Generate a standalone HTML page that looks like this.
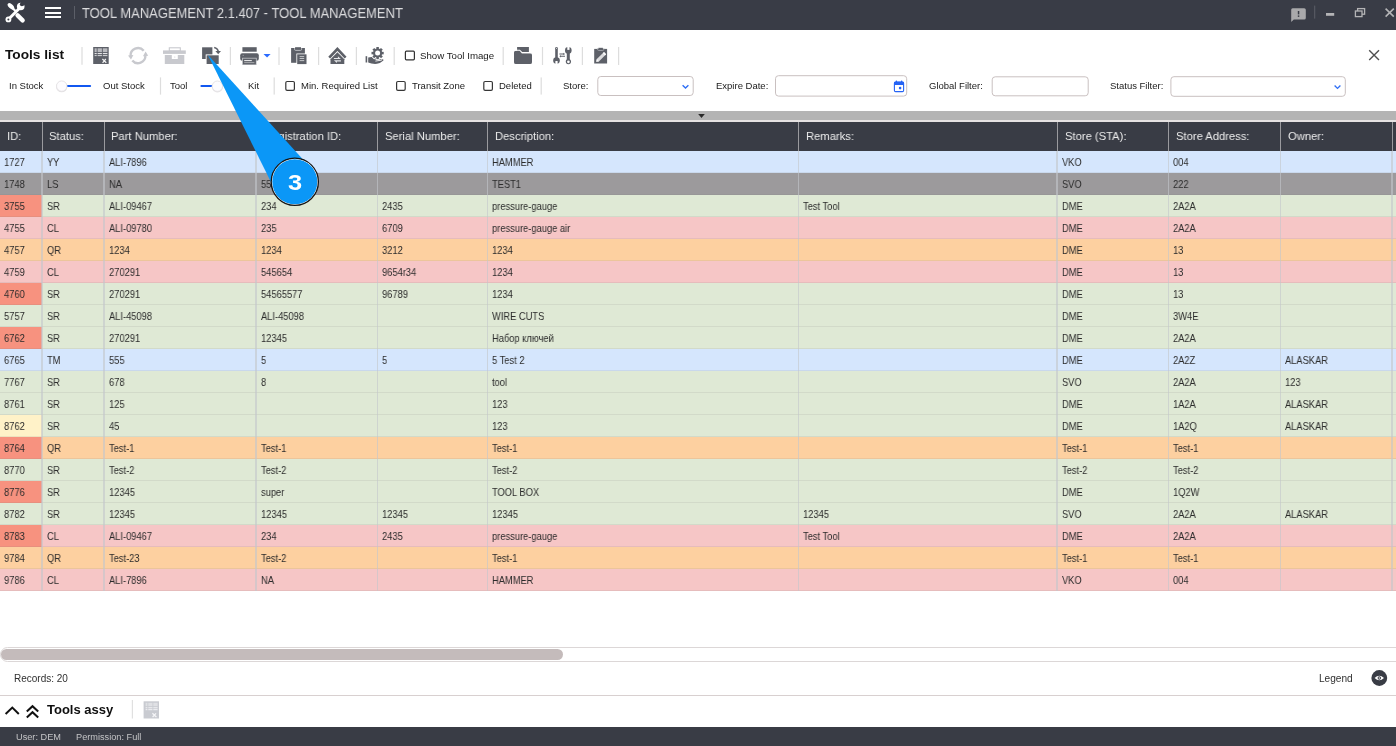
<!DOCTYPE html><html><head><meta charset="utf-8"><style>
*{margin:0;padding:0;box-sizing:border-box}
html,body{width:1396px;height:746px;overflow:hidden;background:#fff;font-family:"Liberation Sans",sans-serif;color:#3a3a3a}
.a{position:absolute}
.t{position:absolute;white-space:nowrap;line-height:1;will-change:transform}
</style></head><body>
<div class="a" style="left:0px;top:0px;width:1396px;height:29.5px;background:#393c46;"></div>
<svg class="a" style="left:2px;top:0" width="28" height="26" viewBox="0 0 28 26">
<g fill="#fff" stroke="#fff">
<ellipse cx="8.9" cy="6.3" rx="4.0" ry="2.2" transform="rotate(45 8.9 6.3)" stroke="none"/>
<line x1="9" y1="6.5" x2="14.5" y2="12" stroke-width="2.2"/>
<line x1="15.6" y1="15.4" x2="20.6" y2="20.4" stroke-width="4.4" stroke-linecap="round"/>
<line x1="7" y1="18.8" x2="17" y2="8.8" stroke-width="3"/>
<circle cx="6.4" cy="19.4" r="2.9" stroke="none"/>
<circle cx="18.7" cy="6.5" r="3.8" stroke="none"/>
</g>
<circle cx="6.4" cy="19.4" r="1.0" fill="#393c46"/>
<circle cx="19.9" cy="4.3" r="2.0" fill="#393c46"/>
<rect x="17.9" y="0" width="4" height="4.3" fill="#393c46" transform="rotate(45 19.9 4.3)"/>
</svg>
<div class="a" style="left:45px;top:6.8px;width:16.4px;height:2.2px;background:#fff;"></div>
<div class="a" style="left:45px;top:11.6px;width:16.4px;height:2.2px;background:#fff;"></div>
<div class="a" style="left:45px;top:16.2px;width:16.4px;height:2.2px;background:#fff;"></div>
<div class="a" style="left:73.6px;top:5.7px;width:1.2px;height:13px;background:#5c5f68;"></div>
<div class="t" style="left:81.5px;top:5.66px;font-size:14.1px;color:#dcdcde;transform:scaleX(0.922);transform-origin:0 0;">TOOL MANAGEMENT 2.1.407 - TOOL MANAGEMENT</div>
<svg class="a" style="left:1288px;top:4px" width="108" height="20" viewBox="1288 4 108 20">
<path d="M1292.6 8.2 h11.6 a1.6 1.6 0 0 1 1.6 1.6 v8.2 a1.6 1.6 0 0 1 -1.6 1.6 h-10.4 l-2.6 2.4 v-12.2 a1.6 1.6 0 0 1 1.4 -1.6z" fill="#a9a9ab"/>
<rect x="1297.8" y="11" width="1.5" height="3.4" fill="#393c46"/>
<rect x="1297.8" y="15.4" width="1.5" height="1.5" fill="#393c46"/>
<rect x="1314.2" y="5.6" width="1" height="13" fill="#5c5f68"/>
<rect x="1326" y="13" width="8.2" height="2.8" fill="#b4b4b6"/>
<rect x="1357.6" y="8.6" width="7" height="5.6" fill="none" stroke="#b4b4b6" stroke-width="1.3"/>
<rect x="1355.4" y="11" width="6.6" height="5.6" fill="#393c46" stroke="#b4b4b6" stroke-width="1.3"/>
<path d="M1385.6 8.6 L1393.8 16.6 M1393.8 8.6 L1385.6 16.6" stroke="#b4b4b6" stroke-width="1.6"/>
</svg>
<div class="t" style="left:5px;top:47.60px;font-size:13.7px;color:#111;font-weight:bold;">Tools list</div>
<svg class="a" style="left:0;top:29px" width="1396" height="82" viewBox="0 29 1396 82"><rect x="81.4" y="47" width="1.2" height="17.799999999999997" fill="#dddddd"/><rect x="93.2" y="47" width="15.5" height="17" fill="#5d6068"/><g fill="#b9babe"><rect x="94.6" y="48.3" width="2.1" height="3.8"/><rect x="97.6" y="48.3" width="4.3" height="3.8"/><rect x="102.8" y="48.3" width="4.6" height="3.8"/></g><g fill="#e4e4e6"><rect x="94.6" y="53.0" width="2.1" height="1.1"/><rect x="97.6" y="53.0" width="4.3" height="1.1"/><rect x="102.8" y="53.0" width="4.6" height="1.1"/></g><g fill="#c9cacd"><rect x="94.6" y="55.0" width="2.1" height="1.1"/><rect x="97.6" y="55.0" width="4.3" height="1.1"/><rect x="102.8" y="55.0" width="4.6" height="1.1"/></g><path d="M102.4 59.0 L106.3 62.8 M105.8 59.0 L102.6 62.8" stroke="#f4f4f4" stroke-width="1.2"/><g fill="none" stroke="#c8c9ce" stroke-width="2.4"><path d="M130.6 56.2 A7.4 7.4 0 0 1 143.7 50.8"/><path d="M132.3 60.4 A7.4 7.4 0 0 0 145.4 55.4"/></g><path d="M128.0 55.6 L133.4 55.0 L131.0 59.4Z M142.9 56.3 L148.2 55.8 L145.6 51.6Z" fill="#c8c9ce"/><rect x="169.3" y="47.8" width="11" height="3.2" fill="none" stroke="#c8c9ce" stroke-width="1.1"/><rect x="163" y="50.4" width="22.8" height="3.5" fill="#c8c9ce"/><path d="M164.8 55 H171.8 V59 H177.8 V55 H184.3 V64 H164.8Z" fill="#c8c9ce"/><circle cx="174.8" cy="57" r="0.5" fill="#c8c9ce"/><rect x="202.1" y="47.3" width="10.3" height="11.7" fill="#5d6068"/><rect x="205.7" y="54.4" width="13.9" height="10.5" fill="#fff"/><rect x="206.6" y="55.3" width="12.1" height="8.7" fill="#5d6068"/><path d="M214.2 47.6 Q217.9 48.4 218.4 52" fill="none" stroke="#5d6068" stroke-width="1.5"/><path d="M215.4 51 L221 51 L218.2 54.2Z" fill="#5d6068"/><rect x="229.8" y="47" width="1.2" height="18" fill="#dddddd"/><rect x="242.4" y="47.2" width="14.3" height="4.5" fill="#5d6068"/><rect x="240.2" y="53.3" width="18.6" height="7.4" rx="2" fill="#5d6068"/><rect x="242.1" y="57.8" width="14.6" height="7.2" fill="#c4c5c9"/><rect x="242.9" y="58.6" width="13" height="5.8" fill="#5d6068"/><rect x="244.2" y="60.1" width="7.6" height="1" fill="#f4f4f4"/><rect x="244.2" y="62.2" width="10.2" height="0.9" fill="#b0b1b5"/><circle cx="243.2" cy="55.4" r="0.6" fill="#9a9ca2"/><path d="M263.5 54 L270.6 54 L267.05 57.6Z" fill="#2a6bff"/><rect x="278.4" y="47.2" width="1.2" height="17.799999999999997" fill="#dddddd"/><rect x="291.1" y="48" width="13.8" height="14.8" fill="#5d6068"/><path d="M294.6 48.2 V49.4 Q294.6 50.3 295.5 50.3 H300.7 Q301.6 50.3 301.6 49.4 V48.2" fill="none" stroke="#c4c5c8" stroke-width="1"/><rect x="295.1" y="47.2" width="5.9" height="2.2" fill="#5d6068"/><rect x="296.4" y="53.5" width="10.9" height="11.4" fill="#fff"/><rect x="297.2" y="54.3" width="9.3" height="9.8" fill="#5d6068"/><g fill="#d0d1d4"><rect x="299.6" y="56.2" width="4.6" height="0.9"/><rect x="299.6" y="58.1" width="4.6" height="0.9"/><rect x="299.6" y="60.2" width="4.6" height="0.9"/></g><rect x="318.0" y="47" width="1.2" height="18" fill="#dddddd"/><path d="M329.2 57.6 L337.4 49.0 L345.6 57.6" fill="none" stroke="#5d6068" stroke-width="2.6"/><path d="M330.5 59.2 L337.4 52.3 L344.3 59.2 V63.9 H330.5Z" fill="#5d6068"/><g fill="#e6e7ea"><path d="M333.9 57.9 H337.9 V56.2 L340.9 59.1 H333.9Z"/><path d="M340.9 60.2 H333.9 L336.9 63.1 V61.4 H340.9Z"/></g><rect x="355.79999999999995" y="47" width="1.2" height="18" fill="#dddddd"/><rect x="365.6" y="56.2" width="1.6" height="6.3" fill="#5d6068"/><path d="M368.2 57.4 Q371.5 56.6 374.2 57.3 L378.8 58.5 Q380.5 59 381.5 59.4 L382.6 59.2 Q384 59.4 383.4 60.6 Q381 63 377 63.8 Q372 64.2 368.2 62.6Z" fill="#5d6068"/><path d="M375.4 61.1 L381.8 60.1" stroke="#fff" stroke-width="0.9"/><g transform="translate(377.6 53.1)"><circle r="4.7" fill="#fff" stroke="#fff" stroke-width="1.6"/><rect x="-1.25" y="-6.1" width="2.5" height="2.4" fill="#fff" stroke="#fff" stroke-width="1.6" transform="rotate(0)"/><rect x="-1.25" y="-6.1" width="2.5" height="2.4" fill="#fff" stroke="#fff" stroke-width="1.6" transform="rotate(45)"/><rect x="-1.25" y="-6.1" width="2.5" height="2.4" fill="#fff" stroke="#fff" stroke-width="1.6" transform="rotate(90)"/><rect x="-1.25" y="-6.1" width="2.5" height="2.4" fill="#fff" stroke="#fff" stroke-width="1.6" transform="rotate(135)"/><rect x="-1.25" y="-6.1" width="2.5" height="2.4" fill="#fff" stroke="#fff" stroke-width="1.6" transform="rotate(180)"/><rect x="-1.25" y="-6.1" width="2.5" height="2.4" fill="#fff" stroke="#fff" stroke-width="1.6" transform="rotate(225)"/><rect x="-1.25" y="-6.1" width="2.5" height="2.4" fill="#fff" stroke="#fff" stroke-width="1.6" transform="rotate(270)"/><rect x="-1.25" y="-6.1" width="2.5" height="2.4" fill="#fff" stroke="#fff" stroke-width="1.6" transform="rotate(315)"/></g><g transform="translate(377.6 53.1)"><circle r="4.6" fill="#5d6068"/><rect x="-1.25" y="-6.1" width="2.5" height="2.4" fill="#5d6068"  transform="rotate(0)"/><rect x="-1.25" y="-6.1" width="2.5" height="2.4" fill="#5d6068"  transform="rotate(45)"/><rect x="-1.25" y="-6.1" width="2.5" height="2.4" fill="#5d6068"  transform="rotate(90)"/><rect x="-1.25" y="-6.1" width="2.5" height="2.4" fill="#5d6068"  transform="rotate(135)"/><rect x="-1.25" y="-6.1" width="2.5" height="2.4" fill="#5d6068"  transform="rotate(180)"/><rect x="-1.25" y="-6.1" width="2.5" height="2.4" fill="#5d6068"  transform="rotate(225)"/><rect x="-1.25" y="-6.1" width="2.5" height="2.4" fill="#5d6068"  transform="rotate(270)"/><rect x="-1.25" y="-6.1" width="2.5" height="2.4" fill="#5d6068"  transform="rotate(315)"/><circle r="2.5" fill="#fff"/></g><rect x="393.59999999999997" y="47" width="1.2" height="18" fill="#dddddd"/><rect x="405.4" y="51.2" width="9" height="8.6" rx="1" fill="none" stroke="#333" stroke-width="1.2"/><rect x="502.59999999999997" y="47" width="1.2" height="18" fill="#dddddd"/><rect x="517.1" y="47" width="11.8" height="5.6" fill="#5d6068"/><path d="M514.0 52.6 Q514.0 50.8 515.8 50.8 H519.4 L521.8 53.2 H530.1 Q532 53.2 532 55.1 V62.2 Q532 64.1 530.1 64.1 H515.9 Q514.0 64.1 514.0 62.2Z" fill="#5d6068"/><path d="M514.2 50.2 H519.7 L522.1 52.6 H531" fill="none" stroke="#fff" stroke-width="1.1"/><rect x="541.9" y="47" width="1.2" height="18" fill="#dddddd"/><g fill="#5d6068"><rect x="555.2" y="47" width="2.6" height="12" rx="1.3"/><circle cx="556.5" cy="60.6" r="3.3"/><rect x="566.8" y="50" width="3" height="10.5"/><circle cx="568.3" cy="50.4" r="3.3"/><circle cx="568.4" cy="61.6" r="2.6"/></g><g fill="#fff"><rect x="555.4" y="61" width="2.2" height="4"/><rect x="567.3" y="45.5" width="2.2" height="4.4"/><circle cx="568.4" cy="61.8" r="1.35"/><circle cx="556.5" cy="48.2" r="0.5"/></g><g fill="#5d6068"><path d="M559.4 53.5 H563.4 V52.7 L565 54 L563.4 55.3 V54.5 H559.4Z"/><path d="M565 55.8 H561 V55 L559.4 56.3 L561 57.6 V56.8 H565Z"/></g><rect x="581.8" y="47" width="1.2" height="18" fill="#dddddd"/><rect x="594.2" y="48.9" width="12.9" height="14.6" fill="#5d6068"/><path d="M597.6 48.4 V49.4 Q597.6 50.4 598.6 50.4 H602.8 Q603.8 50.4 603.8 49.4 V48.4" fill="none" stroke="#a9abb0" stroke-width="0.9"/><rect x="598.4" y="47.8" width="4.5" height="1.9" fill="#5d6068"/><path d="M596.2 61.8 L596.8 58.9 L604.0 52.0 L606.1 54.2 L599.1 61.3Z" fill="#dcdcde"/><path d="M602.8 53.2 L604.0 52.0 L606.1 54.2 L604.9 55.4Z" fill="#fafafa"/><path d="M596.2 61.8 L596.9 59 L599.1 61.4Z" fill="#fafafa"/><rect x="618.0" y="47" width="1.2" height="18" fill="#dddddd"/><path d="M1369.2 50.3 L1379 59.9 M1379 50.3 L1369.2 59.9" stroke="#505050" stroke-width="1.4"/><rect x="66.5" y="84.9" width="24.6" height="2.1" rx="1" fill="#1157f0"/><circle cx="61.7" cy="86.7" r="5.6" fill="#dcdadc" opacity="0.8"/><circle cx="61.7" cy="86.1" r="5.2" fill="#fdfcfe" stroke="#e2e0e2" stroke-width="0.8"/><rect x="159.9" y="77.4" width="1.2" height="17.19999999999999" fill="#dddddd"/><rect x="200.4" y="85" width="12" height="2.1" rx="1" fill="#1157f0"/><circle cx="217.4" cy="86.8" r="5.6" fill="#dcdadc" opacity="0.8"/><circle cx="217.4" cy="86.2" r="5.2" fill="#fdfcfe" stroke="#e2e0e2" stroke-width="0.8"/><rect x="273.59999999999997" y="77.4" width="1.2" height="17.19999999999999" fill="#dddddd"/><rect x="285.8" y="81.5" width="8.6" height="8.8" rx="1.3" fill="none" stroke="#363636" stroke-width="1.2"/><rect x="396.6" y="81.5" width="8.6" height="8.8" rx="1.3" fill="none" stroke="#363636" stroke-width="1.2"/><rect x="483.8" y="81.5" width="8.6" height="8.8" rx="1.3" fill="none" stroke="#363636" stroke-width="1.2"/><rect x="540.6" y="77.4" width="1.2" height="17.19999999999999" fill="#dddddd"/><rect x="597.8" y="76.5" width="95.4" height="19" rx="3" fill="#fff" stroke="#c9c0c0" stroke-width="1"/><path d="M682.6 85.2 L685.5 88 L688.4 85.2" fill="none" stroke="#2f6ff5" stroke-width="1.4"/><rect x="775.5" y="75.7" width="131.2" height="20.4" rx="3" fill="#fff" stroke="#c9c0c0" stroke-width="1"/><rect x="894.4" y="82" width="9.2" height="9.6" rx="1.2" fill="none" stroke="#2563f5" stroke-width="1.1"/><rect x="894" y="81.8" width="10" height="3.2" rx="1" fill="#2563f5"/><rect x="895.8" y="80.6" width="1.2" height="2" fill="#2563f5"/><rect x="901" y="80.6" width="1.2" height="2" fill="#2563f5"/><circle cx="900.1" cy="88.1" r="1.3" fill="#2563f5"/><rect x="992.2" y="76.8" width="96" height="19" rx="3" fill="#fff" stroke="#c9c0c0" stroke-width="1"/><rect x="1170.9" y="76.7" width="174.4" height="19.6" rx="3" fill="#fff" stroke="#c9c0c0" stroke-width="1"/><path d="M1334.6 85.6 L1337.5 88.4 L1340.4 85.6" fill="none" stroke="#2f6ff5" stroke-width="1.4"/></svg>
<div class="t" style="left:9px;top:80.96px;font-size:9.5px;color:#1a1a1a;">In Stock</div>
<div class="t" style="left:103.3px;top:80.96px;font-size:9.5px;color:#1a1a1a;">Out Stock</div>
<div class="t" style="left:169.5px;top:80.96px;font-size:9.5px;color:#1a1a1a;">Tool</div>
<div class="t" style="left:248px;top:80.96px;font-size:9.5px;color:#1a1a1a;">Kit</div>
<div class="t" style="left:300.8px;top:80.96px;font-size:9.5px;color:#1a1a1a;">Min. Required List</div>
<div class="t" style="left:411.6px;top:80.96px;font-size:9.5px;color:#1a1a1a;">Transit Zone</div>
<div class="t" style="left:498.7px;top:80.96px;font-size:9.5px;color:#1a1a1a;">Deleted</div>
<div class="t" style="left:563.4px;top:80.96px;font-size:9.5px;color:#1a1a1a;">Store:</div>
<div class="t" style="left:715.8px;top:80.96px;font-size:9.5px;color:#1a1a1a;">Expire Date:</div>
<div class="t" style="left:929.2px;top:80.96px;font-size:9.5px;color:#1a1a1a;">Global Filter:</div>
<div class="t" style="left:1110.2px;top:80.96px;font-size:9.5px;color:#1a1a1a;">Status Filter:</div>
<div class="t" style="left:420.3px;top:51.39px;font-size:9.7px;color:#1a1a1a;">Show Tool Image</div>
<div class="a" style="left:0px;top:110.5px;width:1396px;height:9.5px;background:#b4b4b4;"></div>
<div class="a" style="left:0px;top:120px;width:1396px;height:2px;background:#e6e2e2;"></div>
<div class="a" style="left:0px;top:122px;width:1396px;height:29px;background:#393c45;"></div>
<svg class="a" style="left:697px;top:113px" width="9" height="6" viewBox="0 0 9 6"><path d="M1.2 0.9 H7.8 L4.5 4.9Z" fill="#2a2a2a"/></svg>
<div class="a" style="left:41.5px;top:122px;width:1.1px;height:29px;background:#9a9a9e;"></div>
<div class="a" style="left:103.5px;top:122px;width:1.1px;height:29px;background:#9a9a9e;"></div>
<div class="a" style="left:255.60000000000002px;top:122px;width:1.1px;height:29px;background:#9a9a9e;"></div>
<div class="a" style="left:377.1px;top:122px;width:1.1px;height:29px;background:#9a9a9e;"></div>
<div class="a" style="left:486.9px;top:122px;width:1.1px;height:29px;background:#9a9a9e;"></div>
<div class="a" style="left:798.0px;top:122px;width:1.1px;height:29px;background:#9a9a9e;"></div>
<div class="a" style="left:1056.7px;top:122px;width:1.1px;height:29px;background:#9a9a9e;"></div>
<div class="a" style="left:1168.1px;top:122px;width:1.1px;height:29px;background:#9a9a9e;"></div>
<div class="a" style="left:1279.9px;top:122px;width:1.1px;height:29px;background:#9a9a9e;"></div>
<div class="a" style="left:1391.7px;top:122px;width:1.1px;height:29px;background:#9a9a9e;"></div>
<div class="t" style="left:7.4px;top:131.21px;font-size:11.8px;color:#ececec;transform:scaleX(0.95);transform-origin:0 0;">ID:</div>
<div class="t" style="left:49.4px;top:131.21px;font-size:11.8px;color:#ececec;transform:scaleX(0.95);transform-origin:0 0;">Status:</div>
<div class="t" style="left:111.4px;top:131.21px;font-size:11.8px;color:#ececec;transform:scaleX(0.95);transform-origin:0 0;">Part Number:</div>
<div class="t" style="left:263.5px;top:131.21px;font-size:11.8px;color:#ececec;transform:scaleX(0.95);transform-origin:0 0;">Registration ID:</div>
<div class="t" style="left:385.0px;top:131.21px;font-size:11.8px;color:#ececec;transform:scaleX(0.95);transform-origin:0 0;">Serial Number:</div>
<div class="t" style="left:494.79999999999995px;top:131.21px;font-size:11.8px;color:#ececec;transform:scaleX(0.95);transform-origin:0 0;">Description:</div>
<div class="t" style="left:805.9px;top:131.21px;font-size:11.8px;color:#ececec;transform:scaleX(0.95);transform-origin:0 0;">Remarks:</div>
<div class="t" style="left:1064.6000000000001px;top:131.21px;font-size:11.8px;color:#ececec;transform:scaleX(0.95);transform-origin:0 0;">Store (STA):</div>
<div class="t" style="left:1176.0px;top:131.21px;font-size:11.8px;color:#ececec;transform:scaleX(0.95);transform-origin:0 0;">Store Address:</div>
<div class="t" style="left:1287.8000000000002px;top:131.21px;font-size:11.8px;color:#ececec;transform:scaleX(0.95);transform-origin:0 0;">Owner:</div>
<div class="a" style="left:0px;top:151px;width:1396px;height:22px;background:#d5e6fd;"></div>
<div class="a" style="left:0px;top:172.2px;width:1396px;height:1px;background:rgba(120,120,120,0.13);"></div>
<div class="t" style="left:3.6px;top:158.08px;font-size:10.3px;color:#2b2b2b;transform:scaleX(0.905);transform-origin:0 0;">1727</div>
<div class="t" style="left:46.7px;top:158.08px;font-size:10.3px;color:#2b2b2b;transform:scaleX(0.905);transform-origin:0 0;">YY</div>
<div class="t" style="left:108.7px;top:158.08px;font-size:10.3px;color:#2b2b2b;transform:scaleX(0.905);transform-origin:0 0;">ALI-7896</div>
<div class="t" style="left:492.09999999999997px;top:158.08px;font-size:10.3px;color:#2b2b2b;transform:scaleX(0.905);transform-origin:0 0;">HAMMER</div>
<div class="t" style="left:1061.9px;top:158.08px;font-size:10.3px;color:#2b2b2b;transform:scaleX(0.905);transform-origin:0 0;">VKO</div>
<div class="t" style="left:1173.3px;top:158.08px;font-size:10.3px;color:#2b2b2b;transform:scaleX(0.905);transform-origin:0 0;">004</div>
<div class="a" style="left:0px;top:173px;width:1396px;height:22px;background:#9c9a9c;"></div>
<div class="a" style="left:0px;top:194.2px;width:1396px;height:1px;background:rgba(120,120,120,0.13);"></div>
<div class="t" style="left:3.6px;top:180.08px;font-size:10.3px;color:#2b2b2b;transform:scaleX(0.905);transform-origin:0 0;">1748</div>
<div class="t" style="left:46.7px;top:180.08px;font-size:10.3px;color:#2b2b2b;transform:scaleX(0.905);transform-origin:0 0;">LS</div>
<div class="t" style="left:108.7px;top:180.08px;font-size:10.3px;color:#2b2b2b;transform:scaleX(0.905);transform-origin:0 0;">NA</div>
<div class="t" style="left:260.8px;top:180.08px;font-size:10.3px;color:#2b2b2b;transform:scaleX(0.905);transform-origin:0 0;">555</div>
<div class="t" style="left:492.09999999999997px;top:180.08px;font-size:10.3px;color:#2b2b2b;transform:scaleX(0.905);transform-origin:0 0;">TEST1</div>
<div class="t" style="left:1061.9px;top:180.08px;font-size:10.3px;color:#2b2b2b;transform:scaleX(0.905);transform-origin:0 0;">SVO</div>
<div class="t" style="left:1173.3px;top:180.08px;font-size:10.3px;color:#2b2b2b;transform:scaleX(0.905);transform-origin:0 0;">222</div>
<div class="a" style="left:0px;top:195px;width:1396px;height:22px;background:#dfe9d5;"></div>
<div class="a" style="left:0px;top:195px;width:42px;height:22px;background:#f7927f;"></div>
<div class="a" style="left:0px;top:216.2px;width:1396px;height:1px;background:rgba(120,120,120,0.13);"></div>
<div class="t" style="left:3.6px;top:202.08px;font-size:10.3px;color:#2b2b2b;transform:scaleX(0.905);transform-origin:0 0;">3755</div>
<div class="t" style="left:46.7px;top:202.08px;font-size:10.3px;color:#2b2b2b;transform:scaleX(0.905);transform-origin:0 0;">SR</div>
<div class="t" style="left:108.7px;top:202.08px;font-size:10.3px;color:#2b2b2b;transform:scaleX(0.905);transform-origin:0 0;">ALI-09467</div>
<div class="t" style="left:260.8px;top:202.08px;font-size:10.3px;color:#2b2b2b;transform:scaleX(0.905);transform-origin:0 0;">234</div>
<div class="t" style="left:382.3px;top:202.08px;font-size:10.3px;color:#2b2b2b;transform:scaleX(0.905);transform-origin:0 0;">2435</div>
<div class="t" style="left:492.09999999999997px;top:202.08px;font-size:10.3px;color:#2b2b2b;transform:scaleX(0.905);transform-origin:0 0;">pressure-gauge</div>
<div class="t" style="left:803.2px;top:202.08px;font-size:10.3px;color:#2b2b2b;transform:scaleX(0.905);transform-origin:0 0;">Test Tool</div>
<div class="t" style="left:1061.9px;top:202.08px;font-size:10.3px;color:#2b2b2b;transform:scaleX(0.905);transform-origin:0 0;">DME</div>
<div class="t" style="left:1173.3px;top:202.08px;font-size:10.3px;color:#2b2b2b;transform:scaleX(0.905);transform-origin:0 0;">2A2A</div>
<div class="a" style="left:0px;top:217px;width:1396px;height:22px;background:#f6c6c6;"></div>
<div class="a" style="left:0px;top:238.2px;width:1396px;height:1px;background:rgba(120,120,120,0.13);"></div>
<div class="t" style="left:3.6px;top:224.08px;font-size:10.3px;color:#2b2b2b;transform:scaleX(0.905);transform-origin:0 0;">4755</div>
<div class="t" style="left:46.7px;top:224.08px;font-size:10.3px;color:#2b2b2b;transform:scaleX(0.905);transform-origin:0 0;">CL</div>
<div class="t" style="left:108.7px;top:224.08px;font-size:10.3px;color:#2b2b2b;transform:scaleX(0.905);transform-origin:0 0;">ALI-09780</div>
<div class="t" style="left:260.8px;top:224.08px;font-size:10.3px;color:#2b2b2b;transform:scaleX(0.905);transform-origin:0 0;">235</div>
<div class="t" style="left:382.3px;top:224.08px;font-size:10.3px;color:#2b2b2b;transform:scaleX(0.905);transform-origin:0 0;">6709</div>
<div class="t" style="left:492.09999999999997px;top:224.08px;font-size:10.3px;color:#2b2b2b;transform:scaleX(0.905);transform-origin:0 0;">pressure-gauge air</div>
<div class="t" style="left:1061.9px;top:224.08px;font-size:10.3px;color:#2b2b2b;transform:scaleX(0.905);transform-origin:0 0;">DME</div>
<div class="t" style="left:1173.3px;top:224.08px;font-size:10.3px;color:#2b2b2b;transform:scaleX(0.905);transform-origin:0 0;">2A2A</div>
<div class="a" style="left:0px;top:239px;width:1396px;height:22px;background:#fdd0a0;"></div>
<div class="a" style="left:0px;top:260.2px;width:1396px;height:1px;background:rgba(120,120,120,0.13);"></div>
<div class="t" style="left:3.6px;top:246.08px;font-size:10.3px;color:#2b2b2b;transform:scaleX(0.905);transform-origin:0 0;">4757</div>
<div class="t" style="left:46.7px;top:246.08px;font-size:10.3px;color:#2b2b2b;transform:scaleX(0.905);transform-origin:0 0;">QR</div>
<div class="t" style="left:108.7px;top:246.08px;font-size:10.3px;color:#2b2b2b;transform:scaleX(0.905);transform-origin:0 0;">1234</div>
<div class="t" style="left:260.8px;top:246.08px;font-size:10.3px;color:#2b2b2b;transform:scaleX(0.905);transform-origin:0 0;">1234</div>
<div class="t" style="left:382.3px;top:246.08px;font-size:10.3px;color:#2b2b2b;transform:scaleX(0.905);transform-origin:0 0;">3212</div>
<div class="t" style="left:492.09999999999997px;top:246.08px;font-size:10.3px;color:#2b2b2b;transform:scaleX(0.905);transform-origin:0 0;">1234</div>
<div class="t" style="left:1061.9px;top:246.08px;font-size:10.3px;color:#2b2b2b;transform:scaleX(0.905);transform-origin:0 0;">DME</div>
<div class="t" style="left:1173.3px;top:246.08px;font-size:10.3px;color:#2b2b2b;transform:scaleX(0.905);transform-origin:0 0;">13</div>
<div class="a" style="left:0px;top:261px;width:1396px;height:22px;background:#f6c6c6;"></div>
<div class="a" style="left:0px;top:282.2px;width:1396px;height:1px;background:rgba(120,120,120,0.13);"></div>
<div class="t" style="left:3.6px;top:268.08px;font-size:10.3px;color:#2b2b2b;transform:scaleX(0.905);transform-origin:0 0;">4759</div>
<div class="t" style="left:46.7px;top:268.08px;font-size:10.3px;color:#2b2b2b;transform:scaleX(0.905);transform-origin:0 0;">CL</div>
<div class="t" style="left:108.7px;top:268.08px;font-size:10.3px;color:#2b2b2b;transform:scaleX(0.905);transform-origin:0 0;">270291</div>
<div class="t" style="left:260.8px;top:268.08px;font-size:10.3px;color:#2b2b2b;transform:scaleX(0.905);transform-origin:0 0;">545654</div>
<div class="t" style="left:382.3px;top:268.08px;font-size:10.3px;color:#2b2b2b;transform:scaleX(0.905);transform-origin:0 0;">9654r34</div>
<div class="t" style="left:492.09999999999997px;top:268.08px;font-size:10.3px;color:#2b2b2b;transform:scaleX(0.905);transform-origin:0 0;">1234</div>
<div class="t" style="left:1061.9px;top:268.08px;font-size:10.3px;color:#2b2b2b;transform:scaleX(0.905);transform-origin:0 0;">DME</div>
<div class="t" style="left:1173.3px;top:268.08px;font-size:10.3px;color:#2b2b2b;transform:scaleX(0.905);transform-origin:0 0;">13</div>
<div class="a" style="left:0px;top:283px;width:1396px;height:22px;background:#dfe9d5;"></div>
<div class="a" style="left:0px;top:283px;width:42px;height:22px;background:#f7927f;"></div>
<div class="a" style="left:0px;top:304.2px;width:1396px;height:1px;background:rgba(120,120,120,0.13);"></div>
<div class="t" style="left:3.6px;top:290.08px;font-size:10.3px;color:#2b2b2b;transform:scaleX(0.905);transform-origin:0 0;">4760</div>
<div class="t" style="left:46.7px;top:290.08px;font-size:10.3px;color:#2b2b2b;transform:scaleX(0.905);transform-origin:0 0;">SR</div>
<div class="t" style="left:108.7px;top:290.08px;font-size:10.3px;color:#2b2b2b;transform:scaleX(0.905);transform-origin:0 0;">270291</div>
<div class="t" style="left:260.8px;top:290.08px;font-size:10.3px;color:#2b2b2b;transform:scaleX(0.905);transform-origin:0 0;">54565577</div>
<div class="t" style="left:382.3px;top:290.08px;font-size:10.3px;color:#2b2b2b;transform:scaleX(0.905);transform-origin:0 0;">96789</div>
<div class="t" style="left:492.09999999999997px;top:290.08px;font-size:10.3px;color:#2b2b2b;transform:scaleX(0.905);transform-origin:0 0;">1234</div>
<div class="t" style="left:1061.9px;top:290.08px;font-size:10.3px;color:#2b2b2b;transform:scaleX(0.905);transform-origin:0 0;">DME</div>
<div class="t" style="left:1173.3px;top:290.08px;font-size:10.3px;color:#2b2b2b;transform:scaleX(0.905);transform-origin:0 0;">13</div>
<div class="a" style="left:0px;top:305px;width:1396px;height:22px;background:#dfe9d5;"></div>
<div class="a" style="left:0px;top:326.2px;width:1396px;height:1px;background:rgba(120,120,120,0.13);"></div>
<div class="t" style="left:3.6px;top:312.08px;font-size:10.3px;color:#2b2b2b;transform:scaleX(0.905);transform-origin:0 0;">5757</div>
<div class="t" style="left:46.7px;top:312.08px;font-size:10.3px;color:#2b2b2b;transform:scaleX(0.905);transform-origin:0 0;">SR</div>
<div class="t" style="left:108.7px;top:312.08px;font-size:10.3px;color:#2b2b2b;transform:scaleX(0.905);transform-origin:0 0;">ALI-45098</div>
<div class="t" style="left:260.8px;top:312.08px;font-size:10.3px;color:#2b2b2b;transform:scaleX(0.905);transform-origin:0 0;">ALI-45098</div>
<div class="t" style="left:492.09999999999997px;top:312.08px;font-size:10.3px;color:#2b2b2b;transform:scaleX(0.905);transform-origin:0 0;">WIRE CUTS</div>
<div class="t" style="left:1061.9px;top:312.08px;font-size:10.3px;color:#2b2b2b;transform:scaleX(0.905);transform-origin:0 0;">DME</div>
<div class="t" style="left:1173.3px;top:312.08px;font-size:10.3px;color:#2b2b2b;transform:scaleX(0.905);transform-origin:0 0;">3W4E</div>
<div class="a" style="left:0px;top:327px;width:1396px;height:22px;background:#dfe9d5;"></div>
<div class="a" style="left:0px;top:327px;width:42px;height:22px;background:#f7927f;"></div>
<div class="a" style="left:0px;top:348.2px;width:1396px;height:1px;background:rgba(120,120,120,0.13);"></div>
<div class="t" style="left:3.6px;top:334.08px;font-size:10.3px;color:#2b2b2b;transform:scaleX(0.905);transform-origin:0 0;">6762</div>
<div class="t" style="left:46.7px;top:334.08px;font-size:10.3px;color:#2b2b2b;transform:scaleX(0.905);transform-origin:0 0;">SR</div>
<div class="t" style="left:108.7px;top:334.08px;font-size:10.3px;color:#2b2b2b;transform:scaleX(0.905);transform-origin:0 0;">270291</div>
<div class="t" style="left:260.8px;top:334.08px;font-size:10.3px;color:#2b2b2b;transform:scaleX(0.905);transform-origin:0 0;">12345</div>
<div class="t" style="left:492.09999999999997px;top:334.08px;font-size:10.3px;color:#2b2b2b;transform:scaleX(0.905);transform-origin:0 0;">Набор ключей</div>
<div class="t" style="left:1061.9px;top:334.08px;font-size:10.3px;color:#2b2b2b;transform:scaleX(0.905);transform-origin:0 0;">DME</div>
<div class="t" style="left:1173.3px;top:334.08px;font-size:10.3px;color:#2b2b2b;transform:scaleX(0.905);transform-origin:0 0;">2A2A</div>
<div class="a" style="left:0px;top:349px;width:1396px;height:22px;background:#d5e6fd;"></div>
<div class="a" style="left:0px;top:370.2px;width:1396px;height:1px;background:rgba(120,120,120,0.13);"></div>
<div class="t" style="left:3.6px;top:356.08px;font-size:10.3px;color:#2b2b2b;transform:scaleX(0.905);transform-origin:0 0;">6765</div>
<div class="t" style="left:46.7px;top:356.08px;font-size:10.3px;color:#2b2b2b;transform:scaleX(0.905);transform-origin:0 0;">TM</div>
<div class="t" style="left:108.7px;top:356.08px;font-size:10.3px;color:#2b2b2b;transform:scaleX(0.905);transform-origin:0 0;">555</div>
<div class="t" style="left:260.8px;top:356.08px;font-size:10.3px;color:#2b2b2b;transform:scaleX(0.905);transform-origin:0 0;">5</div>
<div class="t" style="left:382.3px;top:356.08px;font-size:10.3px;color:#2b2b2b;transform:scaleX(0.905);transform-origin:0 0;">5</div>
<div class="t" style="left:492.09999999999997px;top:356.08px;font-size:10.3px;color:#2b2b2b;transform:scaleX(0.905);transform-origin:0 0;">5 Test 2</div>
<div class="t" style="left:1061.9px;top:356.08px;font-size:10.3px;color:#2b2b2b;transform:scaleX(0.905);transform-origin:0 0;">DME</div>
<div class="t" style="left:1173.3px;top:356.08px;font-size:10.3px;color:#2b2b2b;transform:scaleX(0.905);transform-origin:0 0;">2A2Z</div>
<div class="t" style="left:1285.1000000000001px;top:356.08px;font-size:10.3px;color:#2b2b2b;transform:scaleX(0.905);transform-origin:0 0;">ALASKAR</div>
<div class="a" style="left:0px;top:371px;width:1396px;height:22px;background:#dfe9d5;"></div>
<div class="a" style="left:0px;top:392.2px;width:1396px;height:1px;background:rgba(120,120,120,0.13);"></div>
<div class="t" style="left:3.6px;top:378.08px;font-size:10.3px;color:#2b2b2b;transform:scaleX(0.905);transform-origin:0 0;">7767</div>
<div class="t" style="left:46.7px;top:378.08px;font-size:10.3px;color:#2b2b2b;transform:scaleX(0.905);transform-origin:0 0;">SR</div>
<div class="t" style="left:108.7px;top:378.08px;font-size:10.3px;color:#2b2b2b;transform:scaleX(0.905);transform-origin:0 0;">678</div>
<div class="t" style="left:260.8px;top:378.08px;font-size:10.3px;color:#2b2b2b;transform:scaleX(0.905);transform-origin:0 0;">8</div>
<div class="t" style="left:492.09999999999997px;top:378.08px;font-size:10.3px;color:#2b2b2b;transform:scaleX(0.905);transform-origin:0 0;">tool</div>
<div class="t" style="left:1061.9px;top:378.08px;font-size:10.3px;color:#2b2b2b;transform:scaleX(0.905);transform-origin:0 0;">SVO</div>
<div class="t" style="left:1173.3px;top:378.08px;font-size:10.3px;color:#2b2b2b;transform:scaleX(0.905);transform-origin:0 0;">2A2A</div>
<div class="t" style="left:1285.1000000000001px;top:378.08px;font-size:10.3px;color:#2b2b2b;transform:scaleX(0.905);transform-origin:0 0;">123</div>
<div class="a" style="left:0px;top:393px;width:1396px;height:22px;background:#dfe9d5;"></div>
<div class="a" style="left:0px;top:414.2px;width:1396px;height:1px;background:rgba(120,120,120,0.13);"></div>
<div class="t" style="left:3.6px;top:400.08px;font-size:10.3px;color:#2b2b2b;transform:scaleX(0.905);transform-origin:0 0;">8761</div>
<div class="t" style="left:46.7px;top:400.08px;font-size:10.3px;color:#2b2b2b;transform:scaleX(0.905);transform-origin:0 0;">SR</div>
<div class="t" style="left:108.7px;top:400.08px;font-size:10.3px;color:#2b2b2b;transform:scaleX(0.905);transform-origin:0 0;">125</div>
<div class="t" style="left:492.09999999999997px;top:400.08px;font-size:10.3px;color:#2b2b2b;transform:scaleX(0.905);transform-origin:0 0;">123</div>
<div class="t" style="left:1061.9px;top:400.08px;font-size:10.3px;color:#2b2b2b;transform:scaleX(0.905);transform-origin:0 0;">DME</div>
<div class="t" style="left:1173.3px;top:400.08px;font-size:10.3px;color:#2b2b2b;transform:scaleX(0.905);transform-origin:0 0;">1A2A</div>
<div class="t" style="left:1285.1000000000001px;top:400.08px;font-size:10.3px;color:#2b2b2b;transform:scaleX(0.905);transform-origin:0 0;">ALASKAR</div>
<div class="a" style="left:0px;top:415px;width:1396px;height:22px;background:#dfe9d5;"></div>
<div class="a" style="left:0px;top:415px;width:42px;height:22px;background:#fff2c8;"></div>
<div class="a" style="left:0px;top:436.2px;width:1396px;height:1px;background:rgba(120,120,120,0.13);"></div>
<div class="t" style="left:3.6px;top:422.08px;font-size:10.3px;color:#2b2b2b;transform:scaleX(0.905);transform-origin:0 0;">8762</div>
<div class="t" style="left:46.7px;top:422.08px;font-size:10.3px;color:#2b2b2b;transform:scaleX(0.905);transform-origin:0 0;">SR</div>
<div class="t" style="left:108.7px;top:422.08px;font-size:10.3px;color:#2b2b2b;transform:scaleX(0.905);transform-origin:0 0;">45</div>
<div class="t" style="left:492.09999999999997px;top:422.08px;font-size:10.3px;color:#2b2b2b;transform:scaleX(0.905);transform-origin:0 0;">123</div>
<div class="t" style="left:1061.9px;top:422.08px;font-size:10.3px;color:#2b2b2b;transform:scaleX(0.905);transform-origin:0 0;">DME</div>
<div class="t" style="left:1173.3px;top:422.08px;font-size:10.3px;color:#2b2b2b;transform:scaleX(0.905);transform-origin:0 0;">1A2Q</div>
<div class="t" style="left:1285.1000000000001px;top:422.08px;font-size:10.3px;color:#2b2b2b;transform:scaleX(0.905);transform-origin:0 0;">ALASKAR</div>
<div class="a" style="left:0px;top:437px;width:1396px;height:22px;background:#fdd0a0;"></div>
<div class="a" style="left:0px;top:437px;width:42px;height:22px;background:#f7927f;"></div>
<div class="a" style="left:0px;top:458.2px;width:1396px;height:1px;background:rgba(120,120,120,0.13);"></div>
<div class="t" style="left:3.6px;top:444.08px;font-size:10.3px;color:#2b2b2b;transform:scaleX(0.905);transform-origin:0 0;">8764</div>
<div class="t" style="left:46.7px;top:444.08px;font-size:10.3px;color:#2b2b2b;transform:scaleX(0.905);transform-origin:0 0;">QR</div>
<div class="t" style="left:108.7px;top:444.08px;font-size:10.3px;color:#2b2b2b;transform:scaleX(0.905);transform-origin:0 0;">Test-1</div>
<div class="t" style="left:260.8px;top:444.08px;font-size:10.3px;color:#2b2b2b;transform:scaleX(0.905);transform-origin:0 0;">Test-1</div>
<div class="t" style="left:492.09999999999997px;top:444.08px;font-size:10.3px;color:#2b2b2b;transform:scaleX(0.905);transform-origin:0 0;">Test-1</div>
<div class="t" style="left:1061.9px;top:444.08px;font-size:10.3px;color:#2b2b2b;transform:scaleX(0.905);transform-origin:0 0;">Test-1</div>
<div class="t" style="left:1173.3px;top:444.08px;font-size:10.3px;color:#2b2b2b;transform:scaleX(0.905);transform-origin:0 0;">Test-1</div>
<div class="a" style="left:0px;top:459px;width:1396px;height:22px;background:#dfe9d5;"></div>
<div class="a" style="left:0px;top:480.2px;width:1396px;height:1px;background:rgba(120,120,120,0.13);"></div>
<div class="t" style="left:3.6px;top:466.08px;font-size:10.3px;color:#2b2b2b;transform:scaleX(0.905);transform-origin:0 0;">8770</div>
<div class="t" style="left:46.7px;top:466.08px;font-size:10.3px;color:#2b2b2b;transform:scaleX(0.905);transform-origin:0 0;">SR</div>
<div class="t" style="left:108.7px;top:466.08px;font-size:10.3px;color:#2b2b2b;transform:scaleX(0.905);transform-origin:0 0;">Test-2</div>
<div class="t" style="left:260.8px;top:466.08px;font-size:10.3px;color:#2b2b2b;transform:scaleX(0.905);transform-origin:0 0;">Test-2</div>
<div class="t" style="left:492.09999999999997px;top:466.08px;font-size:10.3px;color:#2b2b2b;transform:scaleX(0.905);transform-origin:0 0;">Test-2</div>
<div class="t" style="left:1061.9px;top:466.08px;font-size:10.3px;color:#2b2b2b;transform:scaleX(0.905);transform-origin:0 0;">Test-2</div>
<div class="t" style="left:1173.3px;top:466.08px;font-size:10.3px;color:#2b2b2b;transform:scaleX(0.905);transform-origin:0 0;">Test-2</div>
<div class="a" style="left:0px;top:481px;width:1396px;height:22px;background:#dfe9d5;"></div>
<div class="a" style="left:0px;top:481px;width:42px;height:22px;background:#f7927f;"></div>
<div class="a" style="left:0px;top:502.2px;width:1396px;height:1px;background:rgba(120,120,120,0.13);"></div>
<div class="t" style="left:3.6px;top:488.08px;font-size:10.3px;color:#2b2b2b;transform:scaleX(0.905);transform-origin:0 0;">8776</div>
<div class="t" style="left:46.7px;top:488.08px;font-size:10.3px;color:#2b2b2b;transform:scaleX(0.905);transform-origin:0 0;">SR</div>
<div class="t" style="left:108.7px;top:488.08px;font-size:10.3px;color:#2b2b2b;transform:scaleX(0.905);transform-origin:0 0;">12345</div>
<div class="t" style="left:260.8px;top:488.08px;font-size:10.3px;color:#2b2b2b;transform:scaleX(0.905);transform-origin:0 0;">super</div>
<div class="t" style="left:492.09999999999997px;top:488.08px;font-size:10.3px;color:#2b2b2b;transform:scaleX(0.905);transform-origin:0 0;">TOOL BOX</div>
<div class="t" style="left:1061.9px;top:488.08px;font-size:10.3px;color:#2b2b2b;transform:scaleX(0.905);transform-origin:0 0;">DME</div>
<div class="t" style="left:1173.3px;top:488.08px;font-size:10.3px;color:#2b2b2b;transform:scaleX(0.905);transform-origin:0 0;">1Q2W</div>
<div class="a" style="left:0px;top:503px;width:1396px;height:22px;background:#dfe9d5;"></div>
<div class="a" style="left:0px;top:524.2px;width:1396px;height:1px;background:rgba(120,120,120,0.13);"></div>
<div class="t" style="left:3.6px;top:510.08px;font-size:10.3px;color:#2b2b2b;transform:scaleX(0.905);transform-origin:0 0;">8782</div>
<div class="t" style="left:46.7px;top:510.08px;font-size:10.3px;color:#2b2b2b;transform:scaleX(0.905);transform-origin:0 0;">SR</div>
<div class="t" style="left:108.7px;top:510.08px;font-size:10.3px;color:#2b2b2b;transform:scaleX(0.905);transform-origin:0 0;">12345</div>
<div class="t" style="left:260.8px;top:510.08px;font-size:10.3px;color:#2b2b2b;transform:scaleX(0.905);transform-origin:0 0;">12345</div>
<div class="t" style="left:382.3px;top:510.08px;font-size:10.3px;color:#2b2b2b;transform:scaleX(0.905);transform-origin:0 0;">12345</div>
<div class="t" style="left:492.09999999999997px;top:510.08px;font-size:10.3px;color:#2b2b2b;transform:scaleX(0.905);transform-origin:0 0;">12345</div>
<div class="t" style="left:803.2px;top:510.08px;font-size:10.3px;color:#2b2b2b;transform:scaleX(0.905);transform-origin:0 0;">12345</div>
<div class="t" style="left:1061.9px;top:510.08px;font-size:10.3px;color:#2b2b2b;transform:scaleX(0.905);transform-origin:0 0;">SVO</div>
<div class="t" style="left:1173.3px;top:510.08px;font-size:10.3px;color:#2b2b2b;transform:scaleX(0.905);transform-origin:0 0;">2A2A</div>
<div class="t" style="left:1285.1000000000001px;top:510.08px;font-size:10.3px;color:#2b2b2b;transform:scaleX(0.905);transform-origin:0 0;">ALASKAR</div>
<div class="a" style="left:0px;top:525px;width:1396px;height:22px;background:#f6c6c6;"></div>
<div class="a" style="left:0px;top:525px;width:42px;height:22px;background:#f7927f;"></div>
<div class="a" style="left:0px;top:546.2px;width:1396px;height:1px;background:rgba(120,120,120,0.13);"></div>
<div class="t" style="left:3.6px;top:532.08px;font-size:10.3px;color:#2b2b2b;transform:scaleX(0.905);transform-origin:0 0;">8783</div>
<div class="t" style="left:46.7px;top:532.08px;font-size:10.3px;color:#2b2b2b;transform:scaleX(0.905);transform-origin:0 0;">CL</div>
<div class="t" style="left:108.7px;top:532.08px;font-size:10.3px;color:#2b2b2b;transform:scaleX(0.905);transform-origin:0 0;">ALI-09467</div>
<div class="t" style="left:260.8px;top:532.08px;font-size:10.3px;color:#2b2b2b;transform:scaleX(0.905);transform-origin:0 0;">234</div>
<div class="t" style="left:382.3px;top:532.08px;font-size:10.3px;color:#2b2b2b;transform:scaleX(0.905);transform-origin:0 0;">2435</div>
<div class="t" style="left:492.09999999999997px;top:532.08px;font-size:10.3px;color:#2b2b2b;transform:scaleX(0.905);transform-origin:0 0;">pressure-gauge</div>
<div class="t" style="left:803.2px;top:532.08px;font-size:10.3px;color:#2b2b2b;transform:scaleX(0.905);transform-origin:0 0;">Test Tool</div>
<div class="t" style="left:1061.9px;top:532.08px;font-size:10.3px;color:#2b2b2b;transform:scaleX(0.905);transform-origin:0 0;">DME</div>
<div class="t" style="left:1173.3px;top:532.08px;font-size:10.3px;color:#2b2b2b;transform:scaleX(0.905);transform-origin:0 0;">2A2A</div>
<div class="a" style="left:0px;top:547px;width:1396px;height:22px;background:#fdd0a0;"></div>
<div class="a" style="left:0px;top:568.2px;width:1396px;height:1px;background:rgba(120,120,120,0.13);"></div>
<div class="t" style="left:3.6px;top:554.08px;font-size:10.3px;color:#2b2b2b;transform:scaleX(0.905);transform-origin:0 0;">9784</div>
<div class="t" style="left:46.7px;top:554.08px;font-size:10.3px;color:#2b2b2b;transform:scaleX(0.905);transform-origin:0 0;">QR</div>
<div class="t" style="left:108.7px;top:554.08px;font-size:10.3px;color:#2b2b2b;transform:scaleX(0.905);transform-origin:0 0;">Test-23</div>
<div class="t" style="left:260.8px;top:554.08px;font-size:10.3px;color:#2b2b2b;transform:scaleX(0.905);transform-origin:0 0;">Test-2</div>
<div class="t" style="left:492.09999999999997px;top:554.08px;font-size:10.3px;color:#2b2b2b;transform:scaleX(0.905);transform-origin:0 0;">Test-1</div>
<div class="t" style="left:1061.9px;top:554.08px;font-size:10.3px;color:#2b2b2b;transform:scaleX(0.905);transform-origin:0 0;">Test-1</div>
<div class="t" style="left:1173.3px;top:554.08px;font-size:10.3px;color:#2b2b2b;transform:scaleX(0.905);transform-origin:0 0;">Test-1</div>
<div class="a" style="left:0px;top:569px;width:1396px;height:22px;background:#f6c6c6;"></div>
<div class="a" style="left:0px;top:590.2px;width:1396px;height:1px;background:rgba(120,120,120,0.13);"></div>
<div class="t" style="left:3.6px;top:576.08px;font-size:10.3px;color:#2b2b2b;transform:scaleX(0.905);transform-origin:0 0;">9786</div>
<div class="t" style="left:46.7px;top:576.08px;font-size:10.3px;color:#2b2b2b;transform:scaleX(0.905);transform-origin:0 0;">CL</div>
<div class="t" style="left:108.7px;top:576.08px;font-size:10.3px;color:#2b2b2b;transform:scaleX(0.905);transform-origin:0 0;">ALI-7896</div>
<div class="t" style="left:260.8px;top:576.08px;font-size:10.3px;color:#2b2b2b;transform:scaleX(0.905);transform-origin:0 0;">NA</div>
<div class="t" style="left:492.09999999999997px;top:576.08px;font-size:10.3px;color:#2b2b2b;transform:scaleX(0.905);transform-origin:0 0;">HAMMER</div>
<div class="t" style="left:1061.9px;top:576.08px;font-size:10.3px;color:#2b2b2b;transform:scaleX(0.905);transform-origin:0 0;">VKO</div>
<div class="t" style="left:1173.3px;top:576.08px;font-size:10.3px;color:#2b2b2b;transform:scaleX(0.905);transform-origin:0 0;">004</div>
<div class="a" style="left:41.1px;top:151px;width:1.8px;height:440px;background:rgba(196,198,204,0.62);"></div>
<div class="a" style="left:103.1px;top:151px;width:1.8px;height:440px;background:rgba(196,198,204,0.62);"></div>
<div class="a" style="left:255.20000000000002px;top:151px;width:1.8px;height:440px;background:rgba(196,198,204,0.62);"></div>
<div class="a" style="left:376.70000000000005px;top:151px;width:1.8px;height:440px;background:rgba(196,198,204,0.62);"></div>
<div class="a" style="left:486.5px;top:151px;width:1.8px;height:440px;background:rgba(196,198,204,0.62);"></div>
<div class="a" style="left:797.6px;top:151px;width:1.8px;height:440px;background:rgba(196,198,204,0.62);"></div>
<div class="a" style="left:1056.3px;top:151px;width:1.8px;height:440px;background:rgba(196,198,204,0.62);"></div>
<div class="a" style="left:1167.6999999999998px;top:151px;width:1.8px;height:440px;background:rgba(196,198,204,0.62);"></div>
<div class="a" style="left:1279.5px;top:151px;width:1.8px;height:440px;background:rgba(196,198,204,0.62);"></div>
<div class="a" style="left:1391.3px;top:151px;width:1.8px;height:440px;background:rgba(196,198,204,0.62);"></div>
<div class="a" style="left:0;top:647px;width:1410px;height:15px;border:1.1px solid #dcd7d7;border-radius:7.5px"></div>
<div class="a" style="left:1px;top:649px;width:561.6px;height:10.9px;border-radius:5.45px;background:#c4bbbb"></div>
<div class="t" style="left:14px;top:673.74px;font-size:10px;color:#303030;">Records: 20</div>
<div class="t" style="left:1319.4px;top:674.05px;font-size:10.1px;color:#303030;">Legend</div>
<svg class="a" style="left:1370px;top:669px" width="18" height="18" viewBox="0 0 18 18">
<circle cx="9.3" cy="9" r="7.9" fill="#393c45"/>
<path d="M4.6 9 Q9.3 4.6 14 9 Q9.3 13.4 4.6 9Z" fill="#fff"/>
<circle cx="9.3" cy="9" r="1.7" fill="#393c45"/><circle cx="9.3" cy="9" r="0.7" fill="#fff"/>
</svg>
<div class="a" style="left:0px;top:695px;width:1396px;height:1.2px;background:#d8d0d0;"></div>
<svg class="a" style="left:0;top:696px" width="170" height="31" viewBox="0 696 170 31">
<path d="M5.6 714 L12.3 707.6 L18.8 714" fill="none" stroke="#111" stroke-width="2"/>
<path d="M26.8 711.6 L32.5 706.2 L38.2 711.6 M26.8 717.6 L32.5 712.2 L38.2 717.6" fill="none" stroke="#111" stroke-width="2"/>
<rect x="131.8" y="700" width="1.2" height="18.5" fill="#e0e0e0"/>
<rect x="143.6" y="701.3" width="15.4" height="17.2" fill="#c9cbd1"/>
<g fill="#dfe0e4"><rect x="145.6" y="702.8" width="1.8" height="3.4"/><rect x="148.3" y="702.8" width="4.2" height="3.4"/><rect x="153.3" y="702.8" width="4.3" height="3.4"/></g>
<g fill="#eeeff2"><rect x="145.6" y="707.2" width="1.8" height="1.1"/><rect x="148.3" y="707.2" width="4.2" height="1.1"/><rect x="153.3" y="707.2" width="4.3" height="1.1"/><rect x="145.6" y="709.1" width="1.8" height="1.1"/><rect x="148.3" y="709.1" width="4.2" height="1.1"/><rect x="153.3" y="709.1" width="4.3" height="1.1"/></g>
<path d="M152.4 713.3 L156.4 717 M156 713.3 L152.6 717" stroke="#f6f6f8" stroke-width="1.2"/>
</svg>
<div class="t" style="left:47.3px;top:703.30px;font-size:13px;color:#0e0e0e;font-weight:bold;">Tools assy</div>
<div class="a" style="left:0px;top:727px;width:1396px;height:19px;background:#393c45;"></div>
<div class="t" style="left:16px;top:732.91px;font-size:9.2px;color:#c4c4c6;">User: DEM</div>
<div class="t" style="left:75.6px;top:732.91px;font-size:9.2px;color:#c4c4c6;">Permission: Full</div>
<svg class="a" style="left:0;top:0" width="1396" height="746" viewBox="0 0 1396 746">
<path d="M207.8 54.7 L277.4 195 L308 165Z" fill="#0b97f7"/>
<circle cx="294.8" cy="181.8" r="23" fill="#0b97f7" stroke="#fff" stroke-width="1"/>
<circle cx="294.8" cy="181.8" r="23.6" fill="none" stroke="#151515" stroke-width="1.3"/>
</svg>
<div class="t" style="left:285px;top:173.2px;width:20px;text-align:center;font-size:21.5px;font-weight:bold;color:#fff;transform:scaleX(1.18);">3</div>
</body></html>
